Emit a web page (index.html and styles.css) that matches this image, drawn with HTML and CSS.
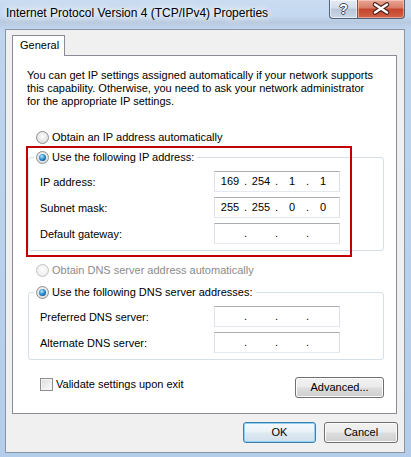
FILE: index.html
```html
<!DOCTYPE html>
<html>

<head>
    <meta charset="utf-8">
    <title>Internet Protocol Version 4 (TCP/IPv4) Properties</title>
    <link rel="stylesheet" href="styles.css">
</head>

<body>
    <div class="window">
        <div class="titlebar">
            <div class="caption">Internet Protocol Version 4 (TCP/IPv4) Properties</div>
            <div class="caption-buttons">
                <div class="cap-btn help"><span>?</span></div>
                <div class="cap-btn close">
                    <svg width="46" height="18" viewBox="0 0 46 18">
                        <path d="M17 4.5 L29 12.5 M29 4.5 L17 12.5" stroke="#4a1f18" stroke-width="4.6" stroke-linecap="round" fill="none"/>
                        <path d="M17 4.5 L29 12.5 M29 4.5 L17 12.5" stroke="#fff" stroke-width="2.4" stroke-linecap="round" fill="none"/>
                    </svg>
                </div>
            </div>
        </div>

        <div class="client">
            <div class="tabs">
                <div class="tab active">General</div>
            </div>
            <div class="panel">
                <p class="intro">You can get IP settings assigned automatically if your network supports<br>this capability. Otherwise, you need to ask your network administrator<br>for the appropriate IP settings.</p>

                <div class="option first"><span class="radio"></span>Obtain an IP address automatically</div>

                <div class="highlight">
                    <fieldset class="group">
                        <legend><span class="option"><span class="radio checked"></span>Use the following IP address:</span></legend>
                        <div class="field">
                            <span class="field-label">IP address:</span>
                            <div class="ip-box"><span>169</span><span class="dot">.</span><span>254</span><span class="dot">.</span><span>1</span><span class="dot">.</span><span>1</span></div>
                        </div>
                        <div class="field">
                            <span class="field-label">Subnet mask:</span>
                            <div class="ip-box"><span>255</span><span class="dot">.</span><span>255</span><span class="dot">.</span><span>0</span><span class="dot">.</span><span>0</span></div>
                        </div>
                        <div class="field">
                            <span class="field-label">Default gateway:</span>
                            <div class="ip-box"><span></span><span class="dot">.</span><span></span><span class="dot">.</span><span></span><span class="dot">.</span><span></span></div>
                        </div>
                    </fieldset>
                </div>

                <div class="option dns-auto disabled"><span class="radio"></span>Obtain DNS server address automatically</div>

                <fieldset class="group dns">
                    <legend><span class="option"><span class="radio checked"></span>Use the following DNS server addresses:</span></legend>
                    <div class="field">
                        <span class="field-label">Preferred DNS server:</span>
                        <div class="ip-box"><span></span><span class="dot">.</span><span></span><span class="dot">.</span><span></span><span class="dot">.</span><span></span></div>
                    </div>
                    <div class="field">
                        <span class="field-label">Alternate DNS server:</span>
                        <div class="ip-box"><span></span><span class="dot">.</span><span></span><span class="dot">.</span><span></span><span class="dot">.</span><span></span></div>
                    </div>
                </fieldset>

                <div class="validate-row">
                    <div class="check-option"><span class="checkbox"></span>Validate settings upon exit</div>
                    <button class="btn advanced">Advanced...</button>
                </div>
            </div>

            <div class="footer">
                <button class="btn ok">OK</button>
                <button class="btn cancel">Cancel</button>
            </div>
        </div>
    </div>
</body>

</html>
```

FILE: styles.css
```css
* {
    box-sizing: border-box;
}

body {
    margin: 0;
    font: 11px/16px "Liberation Sans", Arial, sans-serif;
    color: #000;
    background: #fff;
}

.window {
    width: 411px;
    height: 457px;
    background: linear-gradient(#c9dcf1 0, #bfd5ee 30px, #b3cdea 100%);
    overflow: hidden;
}

/* title bar */

.titlebar {
    height: 29px;
    display: flex;
    justify-content: space-between;
    align-items: flex-start;
    padding-left: 6px;
    background: linear-gradient(transparent 16px, rgba(150, 160, 175, 0.25) 22px, transparent 29px);
}

.caption {
    margin-top: 5px;
    font-size: 12px;
    text-shadow: 0 0 6px #fff, 0 0 10px #fff, 0 0 14px rgba(255, 255, 255, 0.9);
}

.caption-buttons {
    display: flex;
    margin-right: 6px;
}

.cap-btn {
    height: 19px;
    border: 1px solid #50627a;
    border-top: none;
    display: flex;
    align-items: center;
    justify-content: center;
}

.help {
    width: 28px;
    border-right: none;
    border-bottom-left-radius: 4px;
    background: linear-gradient(#e4ebf4 0, #d3dde9 45%, #b9c7d8 50%, #c9d6e5 100%);
    box-shadow: inset 0 0 0 1px rgba(255, 255, 255, 0.6);
}

.help span {
    font: bold 14px/18px "Liberation Sans", sans-serif;
    color: #fff;
    text-shadow: -1px 0 #3d4b5c, 1px 0 #3d4b5c, 0 -1px #3d4b5c, 0 1px #3d4b5c;
}

.close {
    width: 48px;
    border-bottom-right-radius: 4px;
    background: linear-gradient(#e7a797 0, #d77b66 45%, #c4442c 50%, #d26246 100%);
    box-shadow: inset 0 0 0 1px rgba(255, 220, 210, 0.5);
}

/* client area */

.client {
    margin-left: 5px;
    width: 400px;
    height: 424px;
    border: 1px solid #8a96a6;
    background: #f0f0f0;
    padding: 5px 0 9px 0;
}

.tabs {
    display: flex;
    margin-left: 6px;
}

.tab {
    width: 53px;
    height: 21px;
    margin-bottom: -1px;
    padding-left: 7px;
    border: 1px solid #898c95;
    border-bottom: none;
    background: #fff;
    line-height: 19px;
    position: relative;
    z-index: 1;
}

.panel {
    margin-left: 6px;
    width: 385px;
    border: 1px solid #898c95;
    background: #fff;
    padding: 13px 12px 15px 14px;
}

.intro {
    margin: 0;
    line-height: 13px;
    white-space: nowrap;
}

.option {
    display: flex;
    align-items: center;
    height: 16px;
    white-space: nowrap;
}

.option.first {
    margin: 21px 0 0 9px;
}

.option.dns-auto {
    margin: 11px 0 0 9px;
}

.option.disabled {
    color: #8b8b8b;
}

.radio {
    width: 13px;
    height: 13px;
    margin-right: 3px;
    border: 1px solid #8e8f8f;
    border-radius: 50%;
    background: radial-gradient(circle at 50% 40%, #fdfdfd 0, #e6e6e6 55%, #cfcfcf 100%);
    position: relative;
    flex: none;
}

.disabled .radio {
    border-color: #c2c2c2;
    background: radial-gradient(circle at 50% 40%, #fdfdfd 0, #f1f1f1 60%, #e4e4e4 100%);
}

.radio.checked::after {
    content: "";
    position: absolute;
    left: 2px;
    top: 2px;
    width: 7px;
    height: 7px;
    border-radius: 50%;
    background: radial-gradient(circle at 40% 35%, #b7ecff 0, #3b9ad6 40%, #115a9a 75%, #0b3a69 100%);
}

/* group boxes */

.highlight {
    position: relative;
    margin: 4px 0 0 1px;
}

.highlight::after {
    content: "";
    position: absolute;
    left: -2px;
    top: -3px;
    width: 322px;
    height: 107px;
    border: 2px solid #c00000;
}

.group {
    margin: 0;
    width: 356px;
    min-width: 0;
    border: 1px solid #d5dfe5;
    border-radius: 3px;
    padding: 6px 43px 6px 5px;
}

.group.dns {
    margin: 6px 0 0 1px;
}

.group legend {
    padding: 0 3px 0 2px;
}

.field {
    display: flex;
    align-items: center;
    margin-left: 6px;
    height: 21px;
}

.field + .field {
    margin-top: 5px;
}

.field-label {
    flex: 1;
}

.ip-box {
    width: 126px;
    height: 21px;
    display: flex;
    padding-left: 1px;
    border: 1px solid;
    border-color: #abadb3 #dbdfe6 #e3e9ef #e2e3ea;
    background: #fff;
    line-height: 19px;
}

.ip-box span {
    width: 28px;
    text-align: center;
}

.ip-box .dot {
    width: 3px;
}

/* bottom of the tab page */

.validate-row {
    display: flex;
    justify-content: space-between;
    align-items: flex-start;
    margin-top: 16px;
}

.check-option {
    display: flex;
    align-items: center;
    height: 16px;
    margin-left: 13px;
}

.checkbox {
    width: 13px;
    height: 13px;
    margin-right: 3px;
    border: 1px solid #8e8f8f;
    background: linear-gradient(135deg, #dcdcdc, #fbfbfb);
    box-shadow: inset 0 0 0 1px #f4f4f4;
}

.btn {
    height: 21px;
    padding: 0;
    border: 1px solid #707070;
    border-radius: 3px;
    background: linear-gradient(#f2f2f2 0, #ebebeb 48%, #dddddd 52%, #cfcfcf 100%);
    box-shadow: inset 0 0 0 1px #fbfbfb;
    font: inherit;
    line-height: 19px;
    color: #000;
    text-align: center;
}

.btn.advanced {
    width: 89px;
    margin-top: 1px;
}

.footer {
    display: flex;
    justify-content: flex-end;
    gap: 8px;
    margin-top: 8px;
    padding-right: 6px;
}

.btn.ok {
    width: 73px;
    border-color: #3c7fb1;
    background: linear-gradient(#f4f9fc 0, #eaf2f8 48%, #dde8f1 52%, #d2e0ec 100%);
    box-shadow: inset 0 0 0 1px #8fd1f4;
}

.btn.cancel {
    width: 74px;
}
```
